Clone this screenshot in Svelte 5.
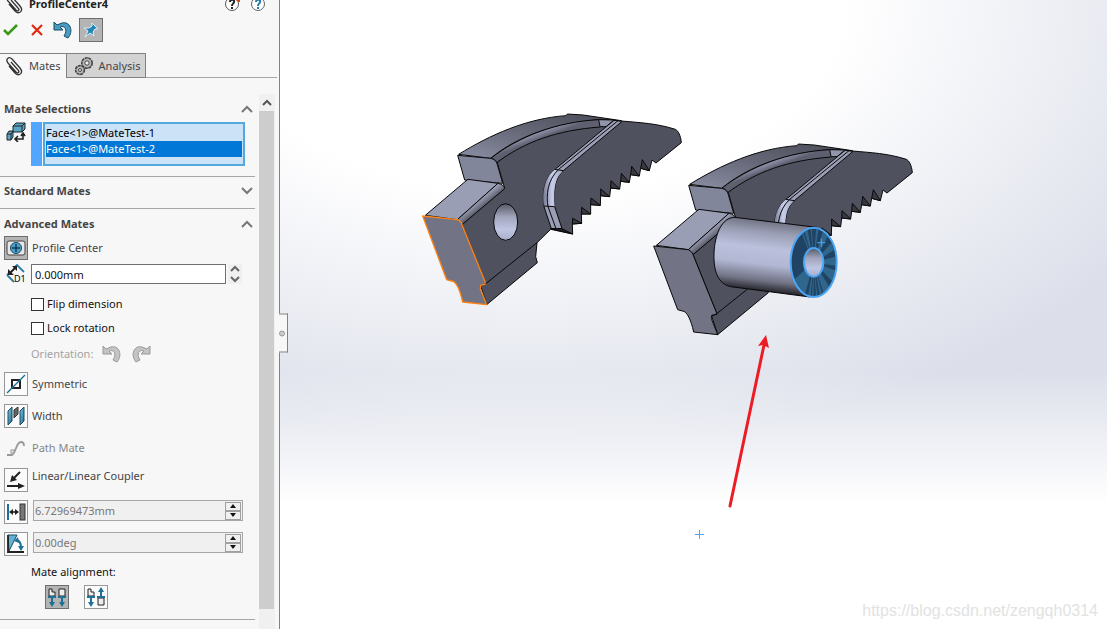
<script>
  let faces = ['Face<1>@MateTest-1', 'Face<1>@MateTest-2'];
  let selectedFace = $state(1);
  let tab = $state('mates');
  let pinned = $state(true);
  let offset = $state('0.000mm');
  let distance = $state('6.72969473mm');
  let angle = $state('0.00deg');
  let flip = $state(false);
  let lock = $state(false);
  let alignment = $state('aligned');
  let open = $state({ selections: true, standard: false, advanced: true });

  // dark notches on the serrated edge of the jaw
  const teeth = [
    'M488 355 L487 372 L515 370 Z',
    'M515 322 L514 342 L542 342 Z',
    'M543 294 L542 314 L571 316 Z',
    'M572 267 L572 287 L599 290 Z',
    'M603 242 L602 264 L629 267 Z',
    'M634 220 L632 244 L658 247 Z',
    'M665 199 L662 224 L688 228 Z',
    'M697 179 L692 205 L718 212 Z'
  ];

  // spokes of the highlighted ring, as angle pairs in degrees
  const spokes = [[-122, -118], [-114, -106], [-98, -94], [-84, -78], [-66, -50], [-36, -22], [-10, 6], [14, 34], [46, 64], [68, 74], [80, 84], [90, 94], [98, 104], [112, 150]];

  const wedge = ([a, b]) => {
    const at = (deg, rx, ry) => {
      const r = (deg * Math.PI) / 180;
      return `${Math.round(521 + rx * Math.cos(r))} ${Math.round(397 + ry * Math.sin(r))}`;
    };
    return `M${at(a, 30, 44)} L${at(a, 66, 100)} A66 100 0 0 1 ${at(b, 66, 100)} L${at(b, 30, 44)} Z`;
  };
</script>

{#snippet clip()}
  <svg class="icon" viewBox="0 0 20 20" aria-hidden="true">
    <path d="M7 6 L14 14 C16 16 14 18 12 16 L4 7 C1 3 5 0 8 3 L16 12 C20 17 15 21 11 17 L5 10" fill="none" stroke="#333" stroke-width="1.3" />
  </svg>
{/snippet}

{#snippet chevron(up)}
  <svg class="chevron" viewBox="0 0 12 8" aria-hidden="true">
    <path d={up ? 'M1 7 L6 2 L11 7' : 'M1 1 L6 6 L11 1'} />
  </svg>
{/snippet}

{#snippet undo(color, edge)}
  <svg class="undo" viewBox="0 0 20 18" aria-hidden="true">
    <path d="M1 1 L1 9 L10 9 L7 6 C12 4 15 9 11 15 L15 17 C21 10 17 0 9 2 L4 4 Z" fill={color} stroke={edge} />
  </svg>
{/snippet}

{#snippet heading(key, label)}
  <h2>
    <button class="heading" aria-expanded={open[key]} onclick={() => (open[key] = !open[key])}>
      <span>{label}</span>
      {@render chevron(open[key])}
    </button>
  </h2>
{/snippet}

{#snippet jaw(selected)}
  <path class="edge" fill="#50515e" d="M262 188 L284 265 L156 374 L228 552 L212 558 L230 614 L382 488 L377 470 L381 428 L422 388 L488 402 L487 372 L515 370 L514 342 L542 342 L542 314 L571 316 L572 287 L599 290 L602 264 L629 267 L632 244 L658 247 L662 224 L688 228 L692 205 L718 212 L726 180 L738 189 L814 128 C812 105 804 92 796 88 C740 70 690 68 634 63 L575 60 C430 72 340 110 262 188 Z" />
  {#each teeth as tooth}
    <path class="edge" fill="#383840" d={tooth} />
  {/each}
  <path class="edge" fill="url(#band)" d="M146 163 C240 105 350 55 468 47 L472 42 L520 45 L634 62 L568 59 C430 70 320 110 242 175 Z" />
  <path class="edge" fill="url(#fillet)" d="M242 175 C330 108 440 66 565 59 C576 62 578 76 570 81 C440 91 345 125 260 188 C258 180 250 176 242 175 Z" />
  <path class="edge" fill="#9296aa" d="M566 59 L612 60 L588 80 L570 80 Z" />
  <path class="edge" fill="#82869a" d="M143 166 L242 175 Q258 178 262 194 L278 250 L164 240 Z" />
  <path class="edge" fill="#9a9eb4" d="M46 346 L164 246 L174 238 L264 250 L142 359 Z" />
  <path class="edge" fill="url(#ledge)" d="M142 359 L264 250 Q282 254 284 266 L156 374 Z" />
  <path class="edge" class:picked={selected} fill="#727485" d="M38 348 L142 359 Q154 364 156 374 L228 552 L212 556 L211 566 L230 614 L158 606 C150 570 138 543 124 543 L110 539 Z" />
  <path class="edge" fill="none" d="M226 552 L381 428" />
  <ellipse class="edge" cx="287" cy="366" rx="36" ry="55" fill="url(#hole)" />
  <path class="edge" fill="#9a9eb4" d="M612 61 L440 204 C402 230 396 280 402 320 L424 386 L456 386 L434 320 C430 262 436 234 460 212 L636 64 Z" />
  <path fill="url(#rib)" d="M438 206 C402 230 396 280 402 318 L434 320 C430 262 436 234 458 214 Z" />
  <path class="edge" fill="none" d="M624 62 L446 208 C412 240 408 286 414 320 L438 386 M402 318 L434 320 M434 208 L460 212" />
  <path class="edge" fill="#222228" d="M422 386 L456 386 L488 402 Z" />
{/snippet}

<div class="app">
  <aside class="panel">
    <header>
      <div class="title">
        {@render clip()}
        <h1>ProfileCenter4</h1>
        <button class="plain help" aria-label="What's new">
          <svg viewBox="0 0 18 18"><circle cx="9" cy="9" r="6.5" fill="#fff" stroke="#555" /><path d="M7 7 C7 4 12 4 11 7 C11 9 9 8 9 11 M9 12 V14" fill="none" stroke="#222" stroke-width="2" /><path d="M14 6 L16 3 V7" fill="none" stroke="#c84b18" stroke-width="2" /></svg>
        </button>
        <button class="plain help" aria-label="Help">
          <svg viewBox="0 0 18 18"><circle cx="9" cy="9" r="6.5" fill="#fff" stroke="#666" /><path d="M7 7 C7 4 12 4 11 7 C11 9 9 8 9 11 M9 12 V14" fill="none" stroke="#2379a8" stroke-width="2" /></svg>
        </button>
      </div>
      <div class="actions">
        <button class="mark" aria-label="OK">
          <svg viewBox="0 0 16 14"><path d="M1 7 L5 11 L14 2" fill="none" stroke="#389a12" stroke-width="2.6" /></svg>
        </button>
        <button class="mark" aria-label="Cancel">
          <svg viewBox="0 0 16 14"><path d="M3 2 L13 12 M13 2 L3 12" fill="none" stroke="#e02a10" stroke-width="2.2" /></svg>
        </button>
        <button class="plain" aria-label="Undo">{@render undo('#4b9cc2', '#174c66')}</button>
        <button class="tool" class:on={pinned} aria-label="Keep visible" onclick={() => (pinned = !pinned)}>
          <svg viewBox="0 0 20 20"><path d="M11 3 L17 9 L14 9 L12 12 L13 16 L9 13 L4 17 L7 11 L3 8 L8 8 L11 6 Z" fill="#2385b8" stroke="#dff0fa" /></svg>
        </button>
      </div>
      <div class="tabs" role="tablist">
        <button class="tab" role="tab" class:active={tab === 'mates'} aria-selected={tab === 'mates'} onclick={() => (tab = 'mates')}>
          {@render clip()}<span>Mates</span>
        </button>
        <button class="tab" role="tab" class:active={tab === 'analysis'} aria-selected={tab === 'analysis'} onclick={() => (tab = 'analysis')}>
          <svg class="icon" viewBox="0 0 20 20" aria-hidden="true">
            <circle cx="13" cy="7" r="5.2" fill="#b8b8b8" stroke="#444" stroke-width="1.6" stroke-dasharray="3 .6" />
            <circle cx="13" cy="7" r="2.2" fill="#eee" stroke="#444" />
            <circle cx="6" cy="14" r="4.4" fill="#b8b8b8" stroke="#444" stroke-width="1.6" stroke-dasharray="3 .6" />
            <circle cx="6" cy="14" r="1.5" fill="#eee" stroke="#444" />
          </svg>
          <span>Analysis</span>
        </button>
      </div>
    </header>

    <div class="body">
      <div class="sections">
        <section class="selections">
          {@render heading('selections', 'Mate Selections')}
          {#if open.selections}
            <div class="pick">
              <svg class="icon" viewBox="0 0 20 20" aria-hidden="true">
                <path d="M7 4 L10 1 L19 1 L19 7 L16 10 L7 10 Z" fill="#58a7c7" stroke="#222" />
                <path d="M7 4 H16 L19 1 M16 4 V10" fill="none" stroke="#222" />
                <path d="M1 12 L3 9 L7 9 L7 15 L5 18 L1 18 Z" fill="#58a7c7" stroke="#222" />
                <path d="M1 12 H5 L7 9 M5 12 V18" fill="none" stroke="#222" />
                <path d="M10 17 H17 V12 M12 14 L9 17 L12 20 M15 14 L17 11 L19 14" fill="none" stroke="#222" stroke-width="1.6" />
              </svg>
              <span class="swatch"></span>
              <div class="list" role="listbox" aria-label="Mate Selections">
                {#each faces as face, i}
                  <button role="option" class="face" class:current={selectedFace === i} aria-selected={selectedFace === i} onclick={() => (selectedFace = i)}>{face}</button>
                {/each}
              </div>
            </div>
          {/if}
        </section>

        <section>
          {@render heading('standard', 'Standard Mates')}
        </section>

        <section class="advanced">
          {@render heading('advanced', 'Advanced Mates')}
          {#if open.advanced}
            <button class="row">
              <span class="tool on">
                <svg viewBox="0 0 20 20"><rect x="1" y="3" width="18" height="14" rx="2" fill="#e6e6e6" stroke="#444" /><circle cx="10" cy="10" r="5.5" fill="#4da0cc" stroke="#174c66" /><path d="M10 6 V14 M6 10 H14" stroke="#10384c" stroke-width="1.4" /></svg>
              </span>
              <span>Profile Center</span>
            </button>

            <div class="row value">
              <svg class="icon" viewBox="0 0 20 20" aria-hidden="true">
                <path d="M9 3 L11 1 L18 8 M1 11 L8 18 M1 11 L3 9" fill="none" stroke="#2a7ca3" stroke-width="1.8" />
                <path d="M4 9 L9 4" stroke="#222" stroke-width="2" />
                <path d="M2 5 V11 H8 Z M6 2 H11 V7 Z" fill="#222" />
                <text x="8" y="18" font-size="9">D1</text>
              </svg>
              <input class="offset" type="text" aria-label="Offset distance" bind:value={offset} />
              <span class="spin light">
                <button aria-label="Increase offset"><svg viewBox="0 0 10 8"><path d="M1 6 L5 2 L9 6" /></svg></button>
                <button aria-label="Decrease offset"><svg viewBox="0 0 10 8"><path d="M1 2 L5 6 L9 2" /></svg></button>
              </span>
            </div>

            <label class="check"><input type="checkbox" bind:checked={flip} />Flip dimension</label>
            <label class="check"><input type="checkbox" bind:checked={lock} />Lock rotation</label>

            <div class="orientation">
              <span>Orientation:</span>
              <button class="plain" disabled aria-label="Rotate left">{@render undo('#c4c4c4', '#999')}</button>
              <button class="plain mirror" disabled aria-label="Rotate right">{@render undo('#c4c4c4', '#999')}</button>
            </div>

            <div class="mates">
              <button class="row">
                <span class="tool">
                  <svg viewBox="0 0 20 20"><rect x="6" y="6" width="8" height="8" fill="none" stroke="#222" stroke-width="2" /><path d="M1 19 L19 1" stroke="#1f7096" stroke-width="1.4" /></svg>
                </span>
                <span>Symmetric</span>
              </button>
              <button class="row">
                <span class="tool">
                  <svg viewBox="0 0 20 20"><path d="M2 5 L6 1 V15 L2 19 Z" fill="url(#plate)" stroke="#164a63" /><path d="M14 5 L18 1 V15 L14 19 Z" fill="url(#plate)" stroke="#164a63" /><path d="M8 4 L12 1 V8 L8 12 Z" fill="#666" stroke="#333" /></svg>
                </span>
                <span>Width</span>
              </button>
              <button class="row" disabled>
                <span class="tool bare">
                  <svg viewBox="0 0 20 20"><path d="M1 17 H6 C10 15 10 4 15 4 Q18 4 18 8" fill="none" stroke="#999" stroke-width="1.8" /><rect x="5" y="12" width="3" height="3" fill="#eee" stroke="#999" /></svg>
                </span>
                <span>Path Mate</span>
              </button>
              <button class="row top">
                <span class="tool">
                  <svg viewBox="0 0 20 20"><path d="M14 2 L7 9 M1 16 H14" stroke="#222" stroke-width="2" /><path d="M4 12 L6 5 L11 10 Z M19 16 L12 13 V19 Z" fill="#222" /></svg>
                </span>
                <span>Linear/Linear Coupler</span>
              </button>
              <div class="row top">
                <button class="tool" aria-label="Distance">
                  <svg viewBox="0 0 20 20"><path d="M2 2 V18" stroke="#1f7096" stroke-width="2" /><rect x="14" y="2" width="5" height="16" fill="#777" stroke="#333" /><path d="M4 10 H12" stroke="#222" stroke-width="1.6" /><path d="M3 10 L7 7 V13 Z M13 10 L9 7 V13 Z" fill="#222" /></svg>
                </button>
                <span class="field">
                  <input type="text" aria-label="Distance value" disabled bind:value={distance} />
                  <span class="spin">
                    <button aria-label="Increase distance"><svg viewBox="0 0 10 8"><path d="M2 6 L5 2 L8 6 Z" /></svg></button>
                    <button aria-label="Decrease distance"><svg viewBox="0 0 10 8"><path d="M2 2 L5 6 L8 2 Z" /></svg></button>
                  </span>
                </span>
              </div>
              <div class="row top">
                <button class="tool" aria-label="Angle">
                  <svg viewBox="0 0 20 20"><path d="M2 1 H11 L3 17 Z" fill="#62b2d5" stroke="#174c66" /><path d="M2 1 V18 H18" fill="none" stroke="#222" stroke-width="1.8" /><path d="M11 6 Q15 8 15 13" fill="none" stroke="#1f7096" stroke-width="2" /><path d="M8 7 L12 3 L13 9 Z M15 17 L12 12 H18 Z" fill="#1f7096" /></svg>
                </button>
                <span class="field">
                  <input type="text" aria-label="Angle value" disabled bind:value={angle} />
                  <span class="spin">
                    <button aria-label="Increase angle"><svg viewBox="0 0 10 8"><path d="M2 6 L5 2 L8 6 Z" /></svg></button>
                    <button aria-label="Decrease angle"><svg viewBox="0 0 10 8"><path d="M2 2 L5 6 L8 2 Z" /></svg></button>
                  </span>
                </span>
              </div>
            </div>

            <p class="align-label">Mate alignment:</p>
            <div class="align">
              <button class="tool" class:on={alignment === 'aligned'} aria-label="Aligned" onclick={() => (alignment = 'aligned')}>
                <svg viewBox="0 0 20 20"><path d="M2 9 V2 H5 V5 H8 V9 Z M12 9 V2 H18 V9 Z" fill="#eee" stroke="#222" /><path d="M1 10 H9 M5 10 V16 M11 10 H19 M15 10 V16" stroke="#1f7096" stroke-width="2" /><path d="M5 20 L2 15 H8 Z M15 20 L12 15 H18 Z" fill="#1f7096" /></svg>
              </button>
              <button class="tool" class:on={alignment === 'anti'} aria-label="Anti-aligned" onclick={() => (alignment = 'anti')}>
                <svg viewBox="0 0 20 20"><path d="M2 9 V2 H5 V5 H8 V9 Z M12 11 V18 H18 V11 Z" fill="#eee" stroke="#222" /><path d="M1 10 H9 M5 10 V16 M11 10 H19 M15 10 V4" stroke="#1f7096" stroke-width="2" /><path d="M5 20 L2 15 H8 Z M15 0 L12 5 H18 Z" fill="#1f7096" /></svg>
              </button>
            </div>
          {/if}
        </section>
      </div>
      <div class="scrollbar">
        <button aria-label="Scroll up">
          <svg viewBox="0 0 10 8"><path d="M1 6 L5 2 L9 6" fill="none" stroke="#555" stroke-width="2" /></svg>
        </button>
        <div class="thumb"></div>
      </div>
    </div>
    <button class="handle" aria-label="Collapse panel"><span></span></button>
  </aside>

  <main class="viewport">
    <svg class="scene" viewBox="280 0 827 629" preserveAspectRatio="xMinYMin meet" role="img" aria-label="Assembly view">
      <defs>
        <linearGradient id="band" x1="0" y1="1" x2="1" y2="0"><stop offset="0" stop-color="#8b8fa4" /><stop offset=".5" stop-color="#666878" /><stop offset="1" stop-color="#494a55" /></linearGradient>
        <linearGradient id="fillet" gradientUnits="userSpaceOnUse" x1="370" y1="88" x2="382" y2="120"><stop offset="0" stop-color="#7c7f93" /><stop offset=".4" stop-color="#9094ab" /><stop offset="1" stop-color="#5e6070" /></linearGradient>
        <linearGradient id="ledge" gradientUnits="userSpaceOnUse" x1="200" y1="300" x2="218" y2="322"><stop offset="0" stop-color="#a9adc4" /><stop offset="1" stop-color="#595b69" /></linearGradient>
        <linearGradient id="hole" x1="0" y1="0" x2="0" y2="1"><stop offset="0" stop-color="#555763" /><stop offset=".35" stop-color="#a0a4bb" /><stop offset=".7" stop-color="#c0c5e3" /><stop offset="1" stop-color="#a9aeca" /></linearGradient>
        <linearGradient id="rib" x1="0" y1="0" x2="1" y2="0"><stop offset="0" stop-color="#777b90" /><stop offset=".45" stop-color="#c8cdeb" /><stop offset="1" stop-color="#a2a6be" /></linearGradient>
        <linearGradient id="tube" gradientUnits="userSpaceOnUse" x1="395" y1="270" x2="370" y2="485"><stop offset="0" stop-color="#6c6e7d" /><stop offset=".18" stop-color="#9a9eb4" /><stop offset=".4" stop-color="#bbc0dd" /><stop offset=".62" stop-color="#b2b7d3" /><stop offset=".85" stop-color="#707284" /><stop offset="1" stop-color="#202025" /></linearGradient>
        <linearGradient id="plate" x1="0" y1="0" x2="1" y2="1"><stop offset="0" stop-color="#80d0ee" /><stop offset="1" stop-color="#1d6284" /></linearGradient>
      </defs>

      <svg x="410" y="100" width="290" height="220" viewBox="0 0 870 660">{@render jaw(true)}</svg>
      <svg x="641" y="130" width="290" height="220" viewBox="0 0 870 660">{@render jaw(false)}</svg>

      <!-- pin going through the second jaw -->
      <svg x="640" y="130" width="290" height="220" viewBox="0 0 870 660">
        <path class="edge" fill="url(#tube)" d="M284 262 L530 292 L510 501 L272 470 C235 462 220 425 222 370 C224 315 245 262 284 262 Z" />
        <ellipse cx="521" cy="397" rx="69" ry="104" fill="#214363" />
        {#each spokes as spoke}
          <path fill="#30658c" d={wedge(spoke)} />
        {/each}
        <ellipse class="glow" cx="521" cy="397" rx="69" ry="104" />
        <ellipse class="glow" cx="521" cy="397" rx="29" ry="43" style:fill="url(#hole)" />
        <path class="glow thin" d="M544 326 V350 M532 338 H556" />
      </svg>

      <path d="M730 506 L764 345" stroke="#ed1c24" stroke-width="3" stroke-linecap="round" />
      <path d="M766 335 L769 348 L763 345 L758 346 Z" fill="#ed1c24" />
      <path d="M699.5 530 V539 M695 534.5 H704" stroke="#4ba6f5" />
    </svg>
    <span class="watermark">https://blog.csdn.net/zengqh0314</span>
  </main>
</div>

<style>
  :global(body) {
    margin: 0;
  }

  .app {
    display: flex;
    min-height: 100vh;
    background: #fff;
    color: #454545;
    font: 11px/16px 'Noto Sans', 'Open Sans', sans-serif;
    overflow: hidden;
  }

  .app * {
    box-sizing: border-box;
  }

  button,
  input {
    font: inherit;
    color: inherit;
    margin: 0;
    padding: 0;
    border: 0;
    background: none;
    border-radius: 0;
  }

  button svg,
  .icon,
  .chevron {
    display: block;
  }

  h1,
  h2,
  p {
    margin: 0;
    font-size: inherit;
  }

  .panel {
    position: relative;
    display: flex;
    flex-direction: column;
    flex: none;
    width: 280px;
    background: #f7f7f7;
    border-right: 1px solid #828282;
  }

  .icon {
    flex: none;
    width: 20px;
    height: 20px;
  }

  /* header */
  .title {
    display: flex;
    align-items: center;
    height: 24px;
    margin-top: -8px;
    padding: 0 12px 0 4px;
    color: #222;
  }

  .title h1 {
    flex: 1;
    padding-left: 5px;
  }

  .help {
    margin-left: 8px;
  }

  .help svg {
    width: 18px;
    height: 18px;
  }

  .actions {
    display: flex;
    align-items: center;
    gap: 6px;
    height: 28px;
    padding-left: 1px;
  }

  .mark {
    width: 20px;
    padding: 0 2px;
  }

  .mark svg {
    width: 16px;
    height: 14px;
  }

  .undo {
    width: 20px;
    height: 18px;
  }

  .tool {
    display: flex;
    align-items: center;
    justify-content: center;
    flex: none;
    width: 24px;
    height: 24px;
    border: 1px solid #979797;
    background: #fbfbfb;
  }

  .tool.on {
    border-color: #6e6e6e;
    background: #b4b4b4;
  }

  .tool.bare {
    border-color: transparent;
    background: none;
  }

  .tool svg {
    width: 20px;
    height: 20px;
  }

  .tabs {
    display: flex;
    height: 25px;
    margin: 9px 2px 0 0;
    border-bottom: 1px solid #a7a7a7;
  }

  .tab {
    display: flex;
    align-items: center;
    gap: 5px;
    height: 25px;
    padding: 0 5px 0 7px;
    border: 1px solid #828282;
    background: #d3d3d3;
  }

  .tab:first-child {
    padding: 0 5px 0 4px;
    border-left: 0;
    border-right: 0;
  }

  .tab.active {
    background: #f7f7f7;
    border-bottom-color: #f7f7f7;
  }

  /* sections */
  .body {
    display: flex;
    flex: 1;
    margin-top: 16px;
  }

  .sections {
    flex: 1;
    padding-right: 4px;
  }

  section {
    border-bottom: 1px solid #a7a7a7;
    padding: 2px 0 5px;
  }

  .selections {
    padding: 3px 0 10px;
  }

  .advanced {
    padding: 3px 0 10px;
  }

  .heading {
    display: flex;
    align-items: center;
    justify-content: space-between;
    width: 100%;
    height: 24px;
    padding: 0 2px 0 4px;
    font-weight: bold;
  }

  .chevron {
    width: 12px;
    height: 8px;
    fill: none;
    stroke: #777;
    stroke-width: 2;
  }

  .pick {
    display: flex;
    padding: 1px 10px 0 6px;
  }

  .swatch {
    width: 11px;
    margin: 0 1px 0 5px;
    background: #53a6ff;
  }

  .list {
    flex: 1;
    height: 44px;
    padding: 1px;
    border: 2px solid #51a9df;
    background: #cce2f7;
    color: #000;
  }

  .face {
    display: block;
    width: 100%;
    height: 16px;
    text-align: left;
  }

  .face.current {
    background: #0078d7;
    color: #fff;
  }

  .row {
    display: flex;
    align-items: center;
    gap: 4px;
    height: 24px;
    padding-left: 4px;
    text-align: left;
  }

  .row:disabled {
    color: #868686;
  }

  .row.top {
    align-items: flex-start;
  }

  .value {
    gap: 2px;
    margin: 2px 0 6px;
    padding-left: 6px;
  }

  .value .icon {
    margin-right: 3px;
  }

  .offset {
    flex: 1;
    min-width: 0;
    height: 20px;
    padding: 0 3px;
    border: 1px solid #707070;
    background: #fff;
    color: #111;
  }

  .spin {
    display: flex;
    flex-direction: column;
    flex: none;
    width: 16px;
  }

  .spin button {
    display: flex;
    align-items: center;
    justify-content: center;
    height: 9px;
    border: 1px solid #a0a0a0;
    background: #f0f0f0;
  }

  .spin svg {
    width: 10px;
    height: 8px;
    fill: #111;
  }

  .spin.light {
    width: 14px;
    margin-right: 13px;
  }

  .spin.light button {
    height: 10px;
    border: 0;
  }

  .spin.light svg {
    fill: none;
    stroke: #666;
    stroke-width: 2;
  }

  .check {
    display: flex;
    align-items: center;
    gap: 3px;
    height: 24px;
    padding-left: 31px;
    color: #111;
  }

  .check input {
    appearance: none;
    width: 13px;
    height: 13px;
    border: 1px solid #333;
    background: #fff;
  }

  .check input:checked {
    background: #0078d7;
  }

  .orientation {
    display: flex;
    align-items: center;
    gap: 9px;
    height: 24px;
    margin: 2px 0 6px;
    padding-left: 31px;
    color: #a3a3a3;
  }

  .mirror {
    transform: scaleX(-1);
  }

  .mates {
    display: flex;
    flex-direction: column;
    gap: 8px;
  }

  .field {
    display: flex;
    flex: 1;
    height: 21px;
    margin: 0 12px 0 1px;
    padding-right: 1px;
    align-items: center;
    border: 1px solid #a7a7a7;
    background: #f0f0f0;
    color: #777;
  }

  .field input {
    flex: 1;
    min-width: 0;
    padding-left: 1px;
  }

  .align-label {
    padding: 8px 0 5px 31px;
    color: #111;
  }

  .align {
    display: flex;
    gap: 15px;
    padding-left: 45px;
  }

  .scrollbar {
    width: 16px;
    margin-right: 4px;
    background: #f0f0f0;
  }

  .scrollbar button {
    display: flex;
    align-items: center;
    justify-content: center;
    width: 15px;
    height: 17px;
  }

  .scrollbar svg {
    width: 10px;
    height: 8px;
  }

  .thumb {
    width: 15px;
    height: 93%;
    background: #cdcdcd;
  }

  .handle {
    position: absolute;
    z-index: 1;
    left: 100%;
    top: 53%;
    width: 9px;
    height: 39px;
    transform: translateY(-50%);
    border: 1px solid #828282;
    border-left: 0;
    background: #f7f7f7;
  }

  .handle span {
    display: block;
    width: 6px;
    height: 6px;
    border: 1px solid #999;
    border-radius: 50%;
    background: #ccc;
  }

  /* graphics area */
  .viewport {
    position: relative;
    flex: 1;
    min-width: 0;
    background:
      linear-gradient(to bottom, rgba(255, 255, 255, 0) 59%, #fff 80%),
      radial-gradient(ellipse 85% 68% at 30% 0, #fff 45%, #dcdfea 105%);
  }

  .scene {
    display: block;
    width: 100%;
    height: 100%;
  }

  .edge {
    stroke: #08080a;
    stroke-width: 3;
    stroke-linejoin: round;
  }

  .edge.picked {
    stroke: #ff8214;
    stroke-width: 4;
  }

  .glow {
    fill: none;
    stroke: #4ba6f5;
    stroke-width: 6;
  }

  .glow.thin {
    stroke-width: 3;
  }

  .watermark {
    position: absolute;
    right: 9px;
    bottom: 9px;
    color: #e2e2e2;
    font: 16px/18px 'Liberation Sans', Arial, sans-serif;
  }
</style>
